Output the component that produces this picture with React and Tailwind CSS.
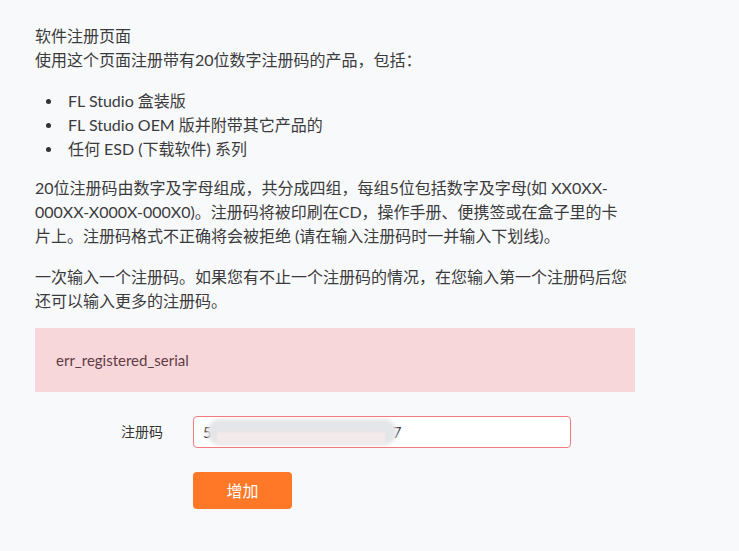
import React from "react";

export default function App() {
  return (
    <div
      className="min-h-[551px] w-full bg-[#f8f9fb] text-[#3b3b3b]"
      style={{ fontFamily: 'Lato, "Noto Sans CJK SC", sans-serif' }}
    >
      <div className="w-[600px] ml-[35px] pt-[24px] text-[16px] leading-[24px]">
        <p className="mb-[17px]">
          软件注册页面
          <br />
          使用这个页面注册带有20位数字注册码的产品，包括：
        </p>
        <ul className="mb-[15px]">
          {[
            "FL Studio 盒装版",
            "FL Studio OEM 版并附带其它产品的",
            "任何 ESD (下载软件) 系列",
          ].map((t) => (
            <li key={t} className="flex items-center">
              <span className="w-[33px] flex">
                <span className="ml-[11px] w-[5px] h-[5px] rounded-full bg-[#333]" />
              </span>
              <span>{t}</span>
            </li>
          ))}
        </ul>
        <p className="mb-[17px] w-[596px]">
          20位注册码由数字及字母组成，共分成四组，每组5位包括数字及字母(如 XX0XX-000XX-X000X-000X0)。注册码将被印刷在CD，操作手册、便携签或在盒子里的卡片上。注册码格式不正确将会被拒绝 (请在输入注册码时一并输入下划线)。
        </p>
        <p className="mb-[15px]">
          一次输入一个注册码。如果您有不止一个注册码的情况，在您输入第一个注册码后您还可以输入更多的注册码。
        </p>
        <div className="bg-[#f8d7da] h-[64px] px-[21px] flex items-center text-[15px] text-[#5e3c45]">
          err_registered_serial
        </div>
        <div className="mt-[24px] flex items-center">
          <div className="w-[128px] text-right text-[14px] text-[#333]">注册码</div>
          <div className="ml-[30px] w-[378px] h-[32px] rounded-[4px] border border-[#f27c7c] bg-white flex items-center pl-[9px] text-[15px] text-[#333] overflow-hidden">
            <span>5</span>
            <span className="relative z-10 w-[190px] h-[26px] -ml-[5px] -mr-[4px]">
              <span className="absolute inset-0 rounded-full bg-[#e4e5e8] blur-[2px]" />
              <span className="absolute left-[10px] right-[12px] top-[13px] h-[12px] bg-[#f3eaeb] blur-[1px]" />
            </span>
            <span>7</span>
          </div>
        </div>
        <div className="mt-[24px] ml-[158px]">
          <button className="w-[99px] h-[37px] rounded-[4px] bg-[#ff7828] text-white text-[16px]">
            增加
          </button>
        </div>
      </div>
    </div>
  );
}
